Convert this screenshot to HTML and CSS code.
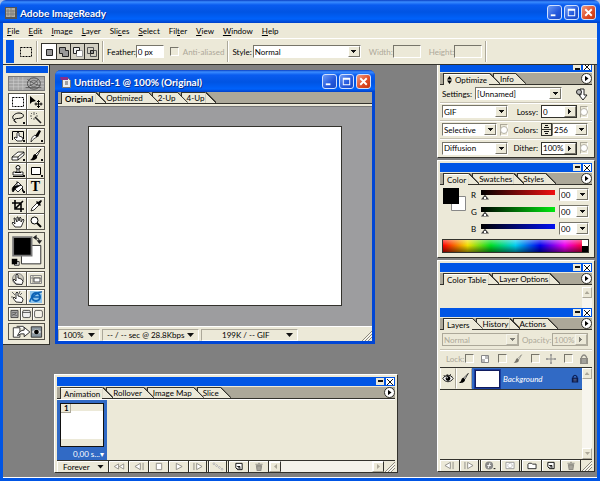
FILE: index.html
```html
<!DOCTYPE html>
<html lang="en">
<head>
<meta charset="utf-8">
<title>Adobe ImageReady</title>
<link rel="stylesheet" href="styles.css">
</head>
<body>
<svg class="defs" aria-hidden="true">
  <symbol id="marquee" viewBox="0 0 14 12"><path d="M1.500 1.500h11v9h-11z" fill="none" stroke="#000" stroke-dasharray="2 1"/></symbol>
  <symbol id="move" viewBox="0 0 14 12"><path d="M1 0v8l2-2 4-1z"/><path d="M9.500 4v8M5.500 8h8M8 5.500h3M8 10.500h3M7 6.500v3M12 6.500v3" stroke="#000" fill="none"/></symbol>
  <symbol id="lasso" viewBox="0 0 14 12"><path d="M4 8C-1 6 3 1 8 1s6 4 2 5-6 0-7 2 3 1 2 3" fill="none" stroke="#000"/></symbol>
  <symbol id="wand" viewBox="0 0 14 12"><path d="M6 5l6 6" stroke="#222" stroke-width="1.600"/><path d="M5 0v3M1 4h2M2 1l1 1M7 2l1-1M3 6l-1 1M7 4h2M5 6v2" stroke="#444" stroke-width=".8" fill="none"/></symbol>
  <symbol id="hand" viewBox="0 0 14 12"><path d="M4 11L1 7l1-1 2 2-1-6h1l2 4V1h1l1 4 1-4 1 1v4l2-3 1 1-2 5-1 2z" fill="#fff" stroke="#000" stroke-width=".8"/></symbol>
  <symbol id="point" viewBox="0 0 14 12"><path d="M5 11L2 7l1-1 2 2V2l1-1 1 1v3l2 .5 2 1 1 2-1 3z" fill="#fff" stroke="#000" stroke-width=".8"/></symbol>
  <symbol id="imap" viewBox="0 0 14 12"><path d="M1.500 10V1.500h11V9" fill="none" stroke="#000"/><path d="M6 11L3 8l1-1 2 1V3l1-1 1 1v3l3 1 1 2-1 2z" fill="#fff" stroke="#000" stroke-width=".8"/></symbol>
  <symbol id="knife" viewBox="0 0 14 12"><path d="M2 12c0-4 2-6 4-7l2 2c-2 1-4 2-6 5z" fill="#fff" stroke="#000" stroke-width=".7"/><path d="M6 6l4-6 2 1-3 6z"/></symbol>
  <symbol id="eraser" viewBox="0 0 14 12"><path d="M1 8l6-5h6l-6 5zM1 8v3h6l6-5V3M7 8v3" fill="#fff" stroke="#000" stroke-width=".8"/></symbol>
  <symbol id="brush" viewBox="0 0 14 12"><path d="M12 0L6 6l2 1z" fill="#fff" stroke="#000" stroke-width=".8"/><path d="M6 5C3 6 5 9 1 11c4 1 8-1 7-4z"/></symbol>
  <symbol id="stamp" viewBox="0 0 14 12"><circle cx="7" cy="2.500" r="2" fill="#fff" stroke="#000"/><path d="M6 4v3H2v3h10V7H8V4z" fill="#fff" stroke="#000" stroke-width=".8"/><path d="M2 11.500h10M4 7.500h6" stroke="#000"/></symbol>
  <symbol id="rect" viewBox="0 0 14 12"><path d="M2.500 2.500h9v7h-9z" fill="#fff" stroke="#000"/></symbol>
  <symbol id="bucket" viewBox="0 0 14 12"><path d="M3 5l4-4 5 5-5 5-4-4z" fill="#fff" stroke="#000" stroke-width=".8"/><path d="M6 4V0M2 11C0 8 2 5 4 5l6-1-5 3z" stroke="#000" stroke-width=".7"/><path d="M11 6l2 4-1 1-1-1z"/></symbol>
  <symbol id="crop" viewBox="0 0 14 12"><path d="M4 0v9h9M1 3h9v9M5 8l7-7" fill="none" stroke="#000" stroke-width="1.600"/></symbol>
  <symbol id="dropper" viewBox="0 0 14 12"><path d="M2 11l1-3 5-5 2 2-5 5z" fill="#fff" stroke="#000" stroke-width=".8"/><path d="M7 2l4 4 1-1-1-1 2-3-1-1-3 2-1-1z"/></symbol>
  <symbol id="zoom" viewBox="0 0 14 12"><circle cx="5.500" cy="4.500" r="3.500" fill="#fff" stroke="#000"/><path d="M8 7l4 4" stroke="#000" stroke-width="2"/></symbol>
  <symbol id="eye" viewBox="0 0 14 12"><path d="M1 6c3-5 9-5 12 0-3 5-9 5-12 0z" fill="#fff" stroke="#000"/><circle cx="7" cy="6" r="2.800"/><path d="M2 2l2 2M6 1v2M10 1L9 3M12 3l-1 1" stroke="#000"/><circle cx="6" cy="5" r=".8" fill="#fff"/></symbol>
  <symbol id="lock" viewBox="0 0 10 10"><path d="M2.500 5V3Q5-1 7.500 3v2" fill="none" stroke="currentColor" stroke-width="1.300"/><path d="M1 4h8v6H1z" fill="currentColor"/><path d="M3 6h4M3 8h4" stroke="#fff" stroke-width=".4"/></symbol>
  <symbol id="grip" viewBox="0 0 10 10"><path d="M0 10L10 0M3 10l7-7M6 10l4-4" stroke="#8d897c"/><path d="M1.500 10L10 1.500M4.500 10L10 4.500" stroke="#fff"/></symbol>
  <symbol id="new" viewBox="0 0 10 10"><path d="M1.500 1.500h7v7h-5l-2-2z" fill="#fff" stroke="#000"/><path d="M3 5h3v3M3 8l3-3" fill="none" stroke="#000"/></symbol>
  <symbol id="trash" viewBox="0 0 10 10"><path d="M1 2.500h8M4 1.500h2M2 4h6l-1 6H3z" fill="#8c8a83" stroke="#8c8a83"/><path d="M4 5v4M6 5v4" stroke="#d5d2c6" stroke-width=".7"/></symbol>
  <symbol id="prev" viewBox="0 0 12 10"><path d="M7.500 1.500v7L1.500 5zM10.500 1v8" fill="#fff" stroke="#8c8a83"/></symbol>
  <symbol id="next" viewBox="0 0 12 10"><path d="M4.500 1.500v7l6-3.500zM1.500 1v8" fill="#fff" stroke="#8c8a83"/></symbol>
  <symbol id="page" viewBox="0 0 12 12"><path d="M2.500 2.500h6l2 2v7h-8z" fill="#eee" stroke="#777"/><path d="M0 1h8v3H1z" fill="#8a2f87"/><path d="M5 6h3M5 8h3" stroke="#555"/></symbol>
</svg>

<header class="titlebar">
  <svg class="app-icon" viewBox="0 0 12 12"><path d="M0 0h12v12H0z" fill="#555"/><path d="M1 1h9v9H1z" fill="#b3afa2"/><path d="M3 2v7M6 1v9M8 3v6M1 4h9M1 7h9" stroke="#777" stroke-width=".8"/></svg>
  <h1>Adobe ImageReady</h1>
  <div class="winbtns">
    <button aria-label="Minimize"><svg viewBox="0 0 14 14"><path d="M3 9h5v2H3z"/></svg></button>
    <button aria-label="Maximize"><svg viewBox="0 0 14 14"><path d="M3 3h8v8H3zm1 2v5h6V5z" fill-rule="evenodd"/></svg></button>
    <button class="close" aria-label="Close"><svg viewBox="0 0 14 14"><path d="M3.500 3.500l7 7M10.500 3.500l-7 7" stroke="#fff" stroke-width="2"/></svg></button>
  </div>
</header>

<nav class="menubar">
  <button><u>F</u>ile</button><button><u>E</u>dit</button><button><u>I</u>mage</button><button><u>L</u>ayer</button><button>Sli<u>c</u>es</button><button><u>S</u>elect</button><button>Fil<u>t</u>er</button><button><u>V</u>iew</button><button><u>W</u>indow</button><button><u>H</u>elp</button>
</nav>

<section class="options">
  <div class="handle"></div>
  <svg class="opt-tool"><use href="#marquee"/></svg>
  <i class="vsep"></i>
  <div class="modes">
    <button class="on" aria-label="New selection"><svg viewBox="0 0 14 14"><path d="M4.500 4.500h6v6h-6z" fill="#999" stroke="#222"/></svg></button>
    <button aria-label="Add"><svg viewBox="0 0 14 14"><path d="M2.500 2.500h6v3h3v6h-6v-3h-3z" fill="#999" stroke="#222"/></svg></button>
    <button aria-label="Subtract"><svg viewBox="0 0 14 14"><path d="M5.500 5.500h6v6h-6z" fill="#fff" stroke="#999"/><path d="M2.500 2.500h6v3h-3v3h-3z" fill="#eee" stroke="#222"/></svg></button>
    <button aria-label="Intersect"><svg viewBox="0 0 14 14"><path d="M2.500 2.500h6v6h-6zM5.500 5.500h6v6h-6z" fill="none" stroke="#555"/><path d="M5.500 5.500h3v3h-3z" fill="#999" stroke="#222"/></svg></button>
  </div>
  <i class="vsep"></i>
  <label for="feather">Feather:</label><input class="field num" id="feather" value="0 px">
  <input type="checkbox" class="check" id="aa" disabled><label class="dim" for="aa">Anti-aliased</label>
  <i class="vsep"></i>
  <label for="style">Style:</label><span class="combo style"><select id="style"><option>Normal</option></select></span>
  <label class="dim gap" for="ow">Width:</label><input class="field num" id="ow" disabled>
  <label class="dim gap" for="oh">Height:</label><input class="field num" id="oh" disabled>
  <i class="vsep"></i>
</section>

<main class="workspace">
  <aside class="toolbox">
    <div class="bar"></div>
    <svg class="logo" viewBox="0 0 38 16" preserveAspectRatio="none"><path d="M0 0h38v16H0z" fill="#a5a5a5"/><path d="M0 4h38M0 8h38M0 12h38M5 0v16M10 0v16M15 0v16" stroke="#d6d6d6" stroke-width=".6"/><g fill="none" stroke="#444"><circle cx="27" cy="8" r="7"/><circle cx="27" cy="8" r="4" stroke="#666"/><path d="M27 8l5-5M27 8l-6 4M27 8l7 3M18 13h17M20 3l7 5" stroke-width=".8"/></g></svg>
    <div class="tools">
      <button class="on" aria-label="Marquee"><svg><use href="#marquee"/></svg></button><button aria-label="Move"><svg><use href="#move"/></svg></button>
      <button class="more" aria-label="Lasso"><svg><use href="#lasso"/></svg></button><button aria-label="Magic wand"><svg><use href="#wand"/></svg></button>
    </div>
    <div class="tools one">
      <button class="more" aria-label="Image map"><svg><use href="#imap"/></svg></button><button class="more" aria-label="Slice"><svg><use href="#knife"/></svg></button>
    </div>
    <div class="tools">
      <button class="more" aria-label="Eraser"><svg><use href="#eraser"/></svg></button><button class="more" aria-label="Brush"><svg><use href="#brush"/></svg></button>
      <button class="more" aria-label="Stamp"><svg><use href="#stamp"/></svg></button><button class="more" aria-label="Rectangle"><svg><use href="#rect"/></svg></button>
      <button class="more" aria-label="Paint bucket"><svg><use href="#bucket"/></svg></button><button class="type">T</button>
    </div>
    <div class="tools">
      <button aria-label="Crop"><svg><use href="#crop"/></svg></button><button aria-label="Eyedropper"><svg><use href="#dropper"/></svg></button>
      <button aria-label="Hand"><svg><use href="#hand"/></svg></button><button aria-label="Zoom"><svg><use href="#zoom"/></svg></button>
    </div>
    <svg class="colors" viewBox="0 0 38 38"><path d="M13.500 13.500h21v20h-21z" fill="#fff" stroke="#222"/><path d="M4.500 4.500h20v20h-20z" fill="#000" stroke="#777" stroke-width="2"/><path d="M6 31h5v4H6z" fill="#fff" stroke="#222"/><path d="M3 28h6v6H3z"/><path d="M29 5q4 0 4 4" fill="none" stroke="#222"/><path d="M26 5l4-3v6zM30 8h6l-3 4z" fill="#222"/></svg>
    <div class="tools one">
      <button aria-label="Image map visibility"><svg viewBox="0 0 14 12"><circle cx="7" cy="6" r="5.500" fill="#d0cdbf" stroke="#888"/><use href="#point"/></svg></button><button aria-label="Slice visibility"><svg viewBox="0 0 14 12"><path d="M1.500 2.500h11v8h-11zM1.500 5h11M4 2v8" fill="none" stroke="#888"/><path d="M5 5h6v4H5z" fill="#fff" stroke="#555"/></svg></button>
    </div>
    <div class="tools one">
      <button aria-label="Rollover preview"><svg viewBox="0 0 14 12"><use href="#point"/><path d="M1 1l3 3M9 0L8 3M11 2l-2 2M0 6h2" stroke="#666"/></svg></button><button aria-label="Browser preview"><svg viewBox="0 0 14 12"><path d="M1 0h9l3 3v9H1z" fill="#8ec5ed"/><circle cx="7" cy="6" r="4" fill="none" stroke="#0c62b5" stroke-width="2"/><path d="M4 6h7M1 11C0 8 9 0 13 1" fill="none" stroke="#0c62b5" stroke-width="1.500"/></svg></button>
    </div>
    <div class="tools three">
      <button aria-label="Standard screen"><svg viewBox="0 0 14 12"><path d="M2.500 1.500h9v9h-9z" fill="#aaa" stroke="#333"/><path d="M4 4h6M4 6l6 2M4 8l5-3" stroke="#555"/></svg></button><button aria-label="Full screen with menu"><svg viewBox="0 0 14 12"><rect x="2" y="1.500" width="10" height="9" rx="2" fill="#eee" stroke="#333"/><path d="M2 4h10" stroke="#333"/></svg></button><button aria-label="Full screen"><svg viewBox="0 0 14 12"><rect x="2" y="1.500" width="10" height="9" rx="2" fill="#f4f2e8" stroke="#444"/></svg></button>
    </div>
    <button class="jump" aria-label="Edit in Photoshop"><svg viewBox="0 0 36 14"><path d="M3.500 2.500h7v10h-7zM7 1h7l2 3" fill="#fff" stroke="#333"/><path d="M8 11q2-6 7-6V2l6 5-6 5V9q-4-1-7 2z" fill="#fff" stroke="#222"/><path d="M22.500 1.500h11v11h-11z" fill="#8a97a0" stroke="#333"/><path d="M23 7q5-6 10 0-5 5-10 0z" fill="#ddd"/><circle cx="28" cy="7" r="2.500"/></svg></button>
  </aside>

  <article class="doc">
    <header class="doc-title">
      <svg class="doc-icon"><use href="#page"/></svg>
      <h2>Untitled-1 @ 100% (Original)</h2>
      <div class="winbtns">
        <button aria-label="Minimize"><svg viewBox="0 0 14 14"><path d="M3 9h5v2H3z"/></svg></button>
        <button aria-label="Maximize"><svg viewBox="0 0 14 14"><path d="M3 3h8v8H3zm1 2v5h6V5z" fill-rule="evenodd"/></svg></button>
        <button class="close" aria-label="Close"><svg viewBox="0 0 14 14"><path d="M3.500 3.500l7 7M10.500 3.500l-7 7" stroke="#fff" stroke-width="2"/></svg></button>
      </div>
    </header>
    <div class="tabs"><button class="tab on"><b>Original</b></button><button class="tab wide">Optimized</button><button class="tab">2-Up</button><button class="tab">4-Up</button></div>
    <div class="stage"><div class="canvas"></div></div>
    <footer class="status">
      <button class="s-zoom">100%<i class="down"></i></button>
      <button class="s-time">-- / -- sec @ 28.8Kbps<i class="down"></i></button>
      <button class="s-size"><span>199K / -- GIF</span><i class="down"></i></button>
      <svg class="grip"><use href="#grip"/></svg>
    </footer>
  </article>

  <div class="dock">
    <section class="palette optimize">
      <div class="bar"><button class="min" aria-label="Collapse"></button><button class="x" aria-label="Close"></button></div>
      <div class="tabs"><button class="tab on"><svg class="updown" viewBox="0 0 5 8"><path d="M0 3.500L2.500 0 5 3.500zM0 4.500L2.500 8 5 4.500z"/></svg>Optimize</button><button class="tab">Info</button><button class="flyout" aria-label="Palette menu"></button></div>
      <div class="orow"><label for="set">Settings:</label><span class="combo set"><select id="set"><option>[Unnamed]</option></select></span><svg class="droplet" viewBox="0 0 12 12"><path d="M4 1h4v6h3l-4 5-4-5h2z" fill="#fff" stroke="#222"/><circle cx="3" cy="4" r="2.500" fill="#bbb" stroke="#222"/></svg></div>
      <div class="orow"><span class="combo"><select aria-label="Format"><option>GIF</option></select></span><label for="lossy">Lossy:</label><span class="combo pop val"><input id="lossy" value="0"></span><button class="round" aria-label="Lossy channel"></button></div>
      <div class="orow"><span class="combo"><select aria-label="Reduction"><option>Selective</option></select></span><button class="round" aria-label="Color channel"></button><label for="cols">Colors:</label><span class="spin"></span><span class="combo cols"><input id="cols" value="256"></span></div>
      <div class="orow"><span class="combo"><select aria-label="Dither method"><option>Diffusion</option></select></span><label for="dith">Dither:</label><span class="combo pop val"><input id="dith" value="100%"></span><button class="round" aria-label="Dither channel"></button></div>
    </section>

    <section class="palette color">
      <div class="bar"><button class="min" aria-label="Collapse"></button><button class="x" aria-label="Close"></button></div>
      <div class="tabs"><button class="tab on">Color</button><button class="tab">Swatches</button><button class="tab">Styles</button><button class="flyout" aria-label="Palette menu"></button></div>
      <div class="mixer">
        <svg class="swatch" viewBox="0 0 24 24"><path d="M8.500 8.500h14v14h-14z" fill="#fff" stroke="#888"/><path d="M0 0h16v16H0z"/></svg>
        <div class="sliders">
          <div class="srow"><label for="r">R</label><input type="range" id="r" class="red" value="0"><span class="combo"><input aria-label="Red value" value="00"></span></div>
          <div class="srow"><label for="g">G</label><input type="range" id="g" class="green" value="0"><span class="combo"><input aria-label="Green value" value="00"></span></div>
          <div class="srow"><label for="b">B</label><input type="range" id="b" class="blue" value="0"><span class="combo"><input aria-label="Blue value" value="00"></span></div>
        </div>
      </div>
      <div class="spectrum"><i class="bw"></i></div>
    </section>

    <section class="palette table">
      <div class="bar"><button class="min" aria-label="Collapse"></button><button class="x" aria-label="Close"></button></div>
      <div class="tabs"><button class="tab on">Color Table</button><button class="tab">Layer Options</button><button class="flyout" aria-label="Palette menu"></button></div>
      <div class="tbody"><div class="scroll"><button class="up" aria-label="Scroll up"></button></div></div>
      <div class="bar"><button class="min" aria-label="Collapse"></button><button class="x" aria-label="Close"></button></div>
      <div class="tabs"><button class="tab on">Layers</button><button class="tab">History</button><button class="tab">Actions</button><button class="flyout" aria-label="Palette menu"></button></div>
      <div class="orow blend dim"><span class="combo"><select aria-label="Blend mode" disabled><option>Normal</option></select></span><label for="opac">Opacity:</label><span class="combo pop val"><input id="opac" value="100%" disabled></span></div>
      <div class="locks dim"><span>Lock:</span>
        <input type="checkbox" class="check" aria-label="Transparency" disabled><svg viewBox="0 0 10 10"><path d="M1.500 1.500h7v7h-7z" fill="#fff" stroke="#888"/><path d="M5 2h3v3H5zM2 5h3v3H2z" fill="#bbb"/></svg>
        <input type="checkbox" class="check" aria-label="Pixels" disabled><svg class="fade"><use href="#brush"/></svg>
        <input type="checkbox" class="check" aria-label="Position" disabled><svg viewBox="0 0 10 10"><path d="M5 0v10M0 5h10M4 1h2M4 9h2M1 4v2M9 4v2" stroke="#888"/></svg>
        <input type="checkbox" class="check" aria-label="All" disabled><svg class="grey"><use href="#lock"/></svg>
      </div>
      <div class="layers">
        <div class="list">
          <div class="layer"><button class="cell" aria-label="Visibility"><svg><use href="#eye"/></svg></button><button class="cell" aria-label="Painting"><svg><use href="#brush"/></svg></button><div class="name"><span class="thumb"></span><em>Background</em><svg class="pad"><use href="#lock"/></svg></div></div>
        </div>
        <div class="scroll"><button class="up" aria-label="Scroll up"></button><button class="dn" aria-label="Scroll down"></button></div>
      </div>
      <div class="foot">
        <button aria-label="Previous"><svg><use href="#prev"/></svg></button><button class="dbl" aria-label="Next"><svg><use href="#next"/></svg></button>
        <button aria-label="Effects"><svg viewBox="0 0 12 10"><circle cx="5" cy="5" r="4.500" fill="#888"/><path d="M4 8l2-6M3 5h4" stroke="#fff"/><path d="M10 8h2v1h-2z"/></svg></button><button class="dbl" aria-label="Mask"><svg viewBox="0 0 12 10"><path d="M1.500 1.500h9v7h-9z" fill="#fff" stroke="#999"/><circle cx="6" cy="5" r="2.500" fill="#fff" stroke="#888" stroke-dasharray="1 1"/></svg></button>
        <button aria-label="New set"><svg viewBox="0 0 12 10"><path d="M1.500 8.500v-5l1-1h3l1 1h4v5z" fill="#fff" stroke="#222"/></svg></button><button aria-label="New layer"><svg><use href="#new"/></svg></button><button aria-label="Delete"><svg><use href="#trash"/></svg></button>
        <svg class="grip"><use href="#grip"/></svg>
      </div>
    </section>
  </div>

  <section class="palette anim">
    <div class="bar"><button class="min" aria-label="Collapse"></button><button class="x" aria-label="Close"></button></div>
    <div class="tabs"><button class="tab on">Animation</button><button class="tab">Rollover</button><button class="tab">Image Map</button><button class="tab">Slice</button><button class="flyout" aria-label="Palette menu"></button></div>
    <div class="frames"><div class="frame"><div class="pic"><b>1</b></div><span>0,00 s...▾</span></div></div>
    <div class="foot">
      <button class="loop">Forever<i class="down"></i></button>
      <button aria-label="First frame"><svg viewBox="0 0 14 10"><path d="M6.500 2v6l-5-3zM12.500 2v6l-5-3z" fill="#fff" stroke="#8c8a83"/></svg></button><button aria-label="Previous frame"><svg><use href="#prev"/></svg></button><button aria-label="Stop"><svg viewBox="0 0 12 10"><path d="M3 1.500h6v7H3z" fill="#fff" stroke="#8c8a83"/></svg></button><button aria-label="Play"><svg viewBox="0 0 12 10"><path d="M3 1.500v7L9.500 5z" fill="#fff" stroke="#8c8a83"/></svg></button><button class="dbl" aria-label="Next frame"><svg><use href="#next"/></svg></button>
      <button class="dbl" aria-label="Tween"><svg viewBox="0 0 12 10"><g fill="#fff" stroke="#aaa"><circle cx="1.500" cy="2" r="1"/><circle cx="4.500" cy="4" r="1"/><circle cx="7.500" cy="6" r="1"/><circle cx="10.500" cy="8" r="1"/></g></svg></button>
      <button aria-label="New frame"><svg><use href="#new"/></svg></button><button aria-label="Delete"><svg><use href="#trash"/></svg></button>
      <div class="hscroll"><button class="lt" aria-label="Scroll left"></button><button class="rt" aria-label="Scroll right"></button></div>
      <svg class="grip"><use href="#grip"/></svg>
    </div>
  </section>
</main>
</body>
</html>
```
FILE: styles.css
```css
:root {
  --face: #ece9d8;
  --blue: #0055e5;
  --shade: #aca899;
  --dark: #33322c;
}

* { box-sizing: border-box; }

body {
  margin: 0;
  min-height: 100vh;
  display: flex;
  flex-direction: column;
  font: 8px/10px Lato, "Liberation Sans", sans-serif;
  color: #000;
  background: #a9bfe8;
}

button, input, select { font: inherit; color: inherit; margin: 0; padding: 0; border: 0; border-radius: 0; background: none; min-width: 0; }
button { display: flex; align-items: center; justify-content: center; white-space: nowrap; }
svg { display: block; flex: none; }
label { white-space: nowrap; }
.defs { position: absolute; width: 0; height: 0; }
.dim { color: #aca899; }

/* Window title bars */
.titlebar, .doc-title {
  display: flex;
  align-items: center;
  color: #fff;
  background: linear-gradient(#0a3fc4 0, #3a8cff 2px, #0a5cf0 5px, #0054e3 12px, #0062fb 19px, #0040c8 100%);
  border-radius: 6px 6px 0 0;
}
.titlebar { height: 23px; padding: 2px 4px 0 5px; gap: 3px; }
h1, h2 { margin: 0; flex: 1; font: bold 10px/14px Lato, sans-serif; white-space: nowrap; text-shadow: 1px 1px #0a2f8c; }
.app-icon, .doc-icon { width: 12px; height: 12px; }
.winbtns { display: flex; gap: 2px; }
.winbtns button { width: 15px; height: 15px; border: 1px solid #cfe0ff; border-radius: 3px; background: linear-gradient(135deg, #6e9cf5, #2257dc 60%, #1a49c4); }
.winbtns .close { background: linear-gradient(135deg, #f09a80, #dd4a24 60%, #c4350f); }
.winbtns svg { width: 13px; height: 13px; fill: #fff; }

/* Menu */
.menubar {
  display: flex;
  gap: 9px;
  height: 15px;
  padding: 0 4px;
  background: var(--face);
  border: solid var(--blue);
  border-width: 0 3px;
}

/* Tool options */
.options {
  display: flex;
  align-items: center;
  height: 27px;
  padding: 0 3px;
  background: var(--face);
  border: solid var(--blue);
  border-width: 0 3px;
  box-shadow: inset 0 1px #fff, inset 0 -1px var(--dark);
}
.handle { width: 8px; height: 23px; background: var(--blue); margin-right: 5px; }
.opt-tool { width: 14px; height: 12px; }
.vsep { width: 2px; height: 21px; margin: 0 3px; background: linear-gradient(90deg, var(--shade) 50%, #fff 50%); }
.modes { display: flex; height: 17px; border: 1px solid var(--dark); }
.modes button { width: 14px; background: #d2cfc2; border-left: 1px solid var(--dark); }
.modes button:first-child { border: 0; }
.modes .on { background: #fff; }
.modes svg { width: 14px; height: 14px; }
.field { height: 13px; padding: 0 1px; background: #fff; border: 1px solid; border-color: #77756a #fff #fff #77756a; }
.field:disabled, .combo :disabled { background: var(--face); color: var(--shade); opacity: 1; }
.num { width: 28px; margin: 0 6px 0 0; }
.gap { margin-left: 8px; }
.gap + .num { margin-right: 0; }
.check { appearance: none; flex: none; width: 9px; height: 9px; border: 1px solid; border-color: #77756a #fff #fff #77756a; }
.check + label { margin-left: 4px; }

.combo { position: relative; display: flex; height: 13px; background: #fff; border: 1px solid; border-color: #77756a #fff #fff #77756a; }
.combo select, .combo input { appearance: none; width: 100%; height: 11px; padding: 0 11px 0 1px; line-height: 10px; outline: 0; }
.combo::after {
  content: "";
  position: absolute;
  inset: 0 0 0 auto;
  width: 10px;
  pointer-events: none;
  border: 1px solid;
  border-color: #fff #77756a #77756a #fff;
  background: linear-gradient(#111, #111) 50% 40%/5px 1px no-repeat, linear-gradient(#111, #111) 50% 53%/3px 1px no-repeat, linear-gradient(#111, #111) 50% 66%/1px 1px no-repeat, var(--face);
}
.pop::after { background: linear-gradient(#111, #111) 30% 50%/1px 5px no-repeat, linear-gradient(#111, #111) 45% 50%/1px 3px no-repeat, linear-gradient(#111, #111) 60% 50%/1px 1px no-repeat, var(--face); }
.pop { border-color: var(--dark); }
.dim .combo::after { opacity: .5; }
.dim .combo { background: var(--face); }
.style { width: 108px; margin-left: 1px; }

/* Workspace */
.workspace {
  position: relative;
  flex: 1;
  background: #808080;
  border: solid var(--blue);
  border-width: 0 3px 3px;
  box-shadow: inset 0 -1px #fff;
}

.toolbox {
  position: absolute;
  left: 0;
  top: 0;
  width: 47px;
  padding: 1px 4px 4px 5px;
  display: flex;
  flex-direction: column;
  gap: 2px;
  background: var(--face);
  border-right: 1px solid var(--dark);
  border-bottom: 1px solid var(--dark);
}
.toolbox .bar { height: 7px; margin: 0 -3px 1px -2px; background: var(--blue); }
.logo { width: 100%; height: 15px; border: 1px solid #777; }
.tools { display: grid; grid-template-columns: 1fr 1fr; gap: 1px; padding: 1px; background: #55534b; }
.tools button { height: 15px; background: var(--face); box-shadow: inset 1px 1px #fff; }
.one button { height: 14px; }
.tools .on { background: #fff; }
.tools svg { width: 14px; height: 12px; }
.tools .more { background: linear-gradient(#111, #111) 95% 90%/2px 2px no-repeat, var(--face); }
.tools .type { font: bold 14px/15px "Liberation Serif", serif; }
.tools.three { grid-template-columns: 1fr 1fr 1fr; }
.three button { height: 12px; }
.three svg { width: 11px; height: 10px; }
.colors { width: 100%; height: 37px; border: 1px solid #55534b; }
.jump { height: 17px; border: 1px solid #55534b; }
.jump svg { width: 34px; height: 14px; }

/* Document window */
.doc {
  position: absolute;
  left: 52px;
  top: 5px;
  width: 320px;
  height: 274px;
  display: flex;
  flex-direction: column;
  background: var(--face);
  border: solid #0046d5;
  border-width: 0 3px 3px;
  border-radius: 6px 6px 0 0;
}
.doc-title { height: 22px; margin: 0 -3px; padding: 1px 4px 0 5px; gap: 2px; }
.stage { flex: 1; display: flex; align-items: center; justify-content: center; background: #9d9d9f; border-top: 1px solid #777; margin-top: 2px; padding-bottom: 1px; }
.canvas { width: 254px; height: 180px; background: #fff; border: 1px solid var(--dark); }
.status { display: flex; height: 15px; padding-top: 2px; gap: 2px; border-top: 1px solid #fff; }
.status button { justify-content: space-between; padding: 0 4px; border: 1px solid; border-color: var(--shade) #fff #fff var(--shade); }
.down { width: 7px; height: 4px; background: #111; clip-path: polygon(0 0, 100% 0, 50% 100%); }
.s-zoom { width: 42px; }
.s-time { width: 97px; }
.s-size { width: 97px; }
.s-size span { margin-left: 16px; }
.grip { width: 10px; height: 10px; align-self: flex-end; margin-left: auto; }

/* Tabs */
.tabs { display: flex; height: 12px; padding-left: 3px; background: var(--shade); border-bottom: 1px solid var(--dark); }
.tab { position: relative; z-index: 1; height: 11px; padding: 0 1px 0 5px; margin-right: 4px; background: var(--face); border: solid var(--dark); border-width: 1px 0 0 1px; }
.tab::after {
  content: "";
  position: absolute;
  left: 100%;
  top: -1px;
  width: 11px;
  height: 11px;
  background: linear-gradient(to top right, var(--face) 47%, var(--dark) 47% 55%, #77756a 55%);
  clip-path: polygon(0 0, 10% 0, 100% 90%, 100% 100%, 0 100%);
}
.tab.on { z-index: 4; height: 12px; padding: 0 2px 0 3px; box-shadow: inset 0 1px #fff; }
.tab:nth-child(2) { z-index: 3; padding-left: 6px; }
.tab:nth-child(3) { z-index: 2; }
.tab.wide { padding-right: 5px; }
.updown { width: 5px; height: 8px; margin-right: 3px; }
.flyout {
  width: 11px;
  height: 11px;
  margin-left: auto;
  border: 1px solid var(--dark);
  border-radius: 50%;
  background: #fff;
}
.flyout::after { content: ""; width: 4px; height: 6px; background: #000; clip-path: polygon(0 0, 100% 50%, 0 100%); }

/* Palettes */
.dock { position: absolute; top: 0; right: 2px; width: 158px; display: flex; flex-direction: column; gap: 2px; }
.palette { padding: 2px; background: var(--face); border: 1px solid; border-color: #fff var(--dark) var(--dark) #fff; }
.bar { display: flex; justify-content: flex-end; align-items: center; gap: 2px; height: 9px; padding-right: 1px; background: var(--blue); margin-bottom: 1px; }
.min, .x { width: 8px; height: 7px; background: var(--face); }
.min { background: linear-gradient(#111, #111) 50% 40%/5px 2px no-repeat, var(--face); }
.x { background: linear-gradient(45deg, transparent 43%, #111 43% 57%, transparent 57%) center/6px 6px no-repeat, linear-gradient(-45deg, transparent 43%, #111 43% 57%, transparent 57%) center/6px 6px no-repeat, #fff; }

.orow { display: flex; align-items: center; height: 18px; padding: 0 4px 0 2px; gap: 3px; border-bottom: 1px solid #c6c2b3; box-shadow: 0 1px #fff; }
.orow:last-child { border: 0; box-shadow: none; }
.orow .combo { flex: 1; }
.orow label { margin-left: auto; }
.orow .set { flex: none; width: 87px; }
.orow label[for="set"] { margin: 0 auto 0 0; }
.droplet { width: 12px; height: 12px; margin: 0 7px 0 11px; }
.orow label:not([for="set"]) { width: 27px; text-align: right; }
.orow .val { flex: none; width: 36px; }
.round { flex: none; width: 8px; height: 12px; border: 1px solid; border-color: var(--shade) #fff #fff var(--shade); }
.round::after { content: ""; width: 6px; height: 6px; border: 1px solid #b5b2a6; border-radius: 50%; background: #fff; flex: none; }
.spin { flex: none; width: 11px; height: 13px; margin-right: -3px; border: 1px solid var(--dark); background: linear-gradient(var(--dark), var(--dark)) 0 50%/100% 1px no-repeat, linear-gradient(#111, #111) 50% 30%/5px 1px no-repeat, linear-gradient(#111, #111) 50% 10%/3px 1px no-repeat, linear-gradient(#111, #111) 50% 70%/5px 1px no-repeat, linear-gradient(#111, #111) 50% 90%/3px 1px no-repeat; }
.orow .cols { flex: none; width: 36px; }
.optimize { border-top: 0; padding-top: 0; padding-bottom: 0; }
.optimize > .bar { align-items: flex-start; height: 7px; }
.optimize > .bar button { height: 5px; background-position: 50% 100%; }

.mixer { display: flex; gap: 4px; padding: 3px 3px 0; }
.swatch { width: 24px; height: 24px; }
.sliders { flex: 1; min-width: 0; display: flex; flex-direction: column; gap: 4px; }
.srow { display: flex; align-items: center; }
.srow label { width: 10px; }
.srow .combo { flex: none; width: 30px; margin-left: 4px; }
.srow input[type="range"] { appearance: none; flex: 1; width: 0; height: 11px; }
.srow input::-webkit-slider-runnable-track { height: 10px; background: linear-gradient(90deg, #000, var(--hue)) 0 0/100% 5px no-repeat; }
.srow input::-webkit-slider-thumb { appearance: none; width: 8px; height: 5px; margin-top: 5px; background: linear-gradient(#fff, #fff) 50% 67%/2px 2px no-repeat, #444; clip-path: polygon(50% 0, 100% 100%, 0 100%); }
.red { --hue: #f01010; }
.green { --hue: #00e810; }
.blue { --hue: #0010f0; }
.spectrum {
  display: flex;
  justify-content: flex-end;
  height: 14px;
  margin: 4px 3px 2px 2px;
  border: 1px solid var(--dark);
  background: linear-gradient(rgb(255 255 255 / .4), transparent 45%, rgb(0 0 0 / .5)), linear-gradient(90deg, #f00, #f0e000 17%, #0d2 33%, #0ce 50%, #00e 67%, #e0e 84%, #f00);
}
.bw { width: 6px; background: linear-gradient(#fff 50%, #000 50%); }

.tbody { display: flex; justify-content: flex-end; height: 23px; padding-top: 2px; }
.scroll { display: flex; flex-direction: column; justify-content: space-between; width: 10px; background: #f7f5ee; }
.scroll button, .hscroll button { width: 10px; height: 11px; background: var(--face); border: 1px solid; border-color: #fff var(--shade) var(--shade) #fff; }
.scroll button::after, .hscroll button::after { content: ""; width: 5px; height: 3px; background: var(--shade); clip-path: polygon(50% 0, 100% 100%, 0 100%); }
.scroll .dn::after { transform: rotate(180deg); }
.table { padding-bottom: 0; }

.blend { height: 20px; }
.orow.blend .combo { border-color: var(--shade); }
.locks { display: flex; align-items: center; gap: 6px; height: 17px; padding: 0 6px; }
.locks svg { width: 10px; height: 10px; margin-right: 2px; }
.locks .check { border-color: #77756a #fff #fff #77756a; }
.locks > span { margin-right: -5px; }
.fade { opacity: .5; }
.grey { color: #8c8a83; }
.layers { display: flex; height: 92px; border-top: 1px solid var(--dark); }
.list { flex: 1; }
.layer { display: flex; height: 22px; border-bottom: 1px solid var(--dark); }
.cell { width: 16px; border: 1px solid; border-color: var(--face) var(--shade) var(--face) #fff; }
.cell svg { width: 12px; height: 11px; }
.name { flex: 1; display: flex; align-items: center; gap: 3px; padding: 0 3px 0 3px; background: #316ac5; color: #fff; }
.thumb { width: 25px; height: 18px; background: #fff; border: 1px solid #101c60; outline: 1px solid #1a3c9c; }
.name em { flex: 1; }
.pad { width: 8px; height: 9px; color: #0a1a50; }

.foot { display: flex; height: 12px; border-top: 1px solid var(--dark); }
.foot button { flex: 1; border-right: 1px solid var(--dark); box-shadow: inset 1px 1px #fff; }
.foot .dbl { border-right: 3px double var(--dark); }
.foot button svg { width: 12px; height: 9px; }
.foot .grip { margin-left: 1px; }

/* Animation palette */
.anim { position: absolute; left: 51px; bottom: 5px; width: 344px; padding-bottom: 0; }
.frames { display: flex; height: 61px; border-top: 1px solid #fff; }
.frame { width: 50px; padding: 3px; background: #316ac5; color: #fff; text-align: right; }
.pic { height: 44px; display: flex; flex-direction: column; margin-bottom: 2px; background: linear-gradient(var(--face) 7px, #fff 7px 35px, var(--face) 35px); border: 1px solid #111; color: #000; text-align: left; }
.pic b { width: 10px; padding-left: 3px; line-height: 8px; background: var(--face); border-right: 1px solid var(--shade); border-bottom: 1px solid var(--shade); }
.anim .foot > button { flex: none; width: 20px; }
.anim .foot .loop { width: 52px; justify-content: space-between; padding: 0 4px 0 6px; }
.hscroll { flex: 1; display: flex; justify-content: space-between; background: #f4f2ea; }
.foot .hscroll button { flex: none; width: 12px; }
.hscroll .lt::after { transform: rotate(-90deg); }
.hscroll .rt::after { transform: rotate(90deg); }
```
